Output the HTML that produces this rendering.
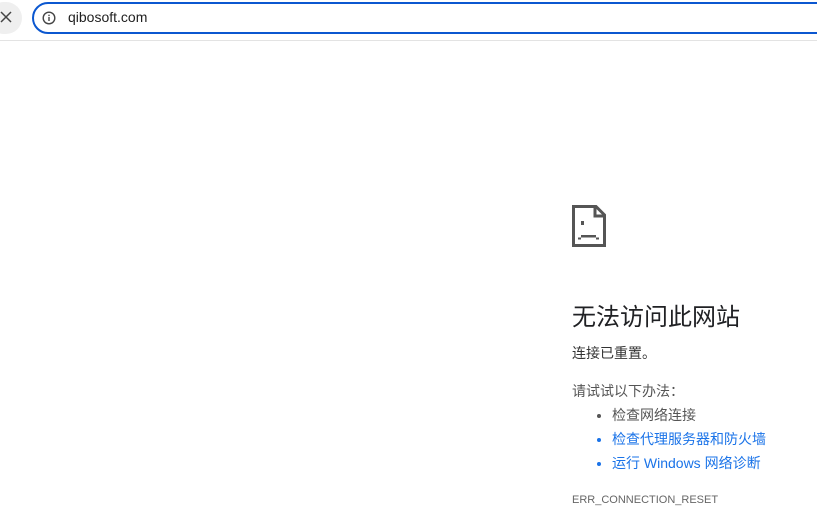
<!DOCTYPE html>
<html><head><meta charset="utf-8"><style>
html,body{margin:0;padding:0;width:817px;height:517px;overflow:hidden;background:#fff;font-family:"Liberation Sans","Noto Sans CJK SC",sans-serif;}
.bar{position:absolute;left:0;top:0;width:817px;height:38px;background:#fff;}
.x{position:absolute;left:-12px;top:2px;width:34px;height:32px;border-radius:16px;background:#efefef;}
.omni{position:absolute;left:32px;top:2px;width:800px;height:28px;border:2px solid #0b57d0;border-radius:16px;background:#fff;}
.line{position:absolute;left:0;top:40px;width:817px;height:1px;background:#e3e3e3;}
.url{position:absolute;left:68px;top:9px;font-size:14px;color:#1f1f1f;}
.t{position:absolute;left:572px;color:#202124;}
li{margin:0;}
</style></head><body>
<div class="bar"></div>
<div class="x"></div>
<svg style="position:absolute;left:0;top:11px" width="12" height="12"><path d="M1 1L11 11M11 1L1 11" stroke="#444" stroke-width="1.5"/></svg>
<div class="omni"></div>
<svg style="position:absolute;left:42px;top:11px" width="14" height="14"><circle cx="7" cy="7" r="5.8" fill="none" stroke="#444" stroke-width="1.4"/><rect x="6.3" y="6" width="1.4" height="4" fill="#444"/><rect x="6.3" y="3.7" width="1.4" height="1.4" fill="#444"/></svg>
<div class="url">qibosoft.com</div>
<div class="line"></div>
<svg style="position:absolute;left:572px;top:205px" width="34" height="42"><path d="M1.5 1.5H24L32.5 10V40.5H1.5Z" fill="none" stroke="#555" stroke-width="3"/><path d="M23 1.5V11H32" fill="none" stroke="#555" stroke-width="3"/><rect x="9" y="16" width="3" height="4" fill="#555"/><rect x="9" y="30" width="15" height="2.5" fill="#555"/><rect x="6" y="32.5" width="3" height="2" fill="#555"/><rect x="24" y="32.5" width="3" height="2" fill="#555"/></svg>
<div class="t" style="top:297px;font-size:24px">无法访问此网站</div>
<div class="t" style="top:343px;font-size:14px;color:#333">连接已重置。</div>
<div class="t" style="top:381px;font-size:14px;color:#555">请试试以下办法：</div>
<ul style="position:absolute;left:572px;top:403px;margin:0;padding-left:40px;font-size:14px;line-height:24px;color:#555">
<li>检查网络连接</li>
<li style="color:#1a73e8"><span>检查代理服务器和防火墙</span></li>
<li style="color:#1a73e8">运行 Windows 网络诊断</li>
</ul>
<div class="t" style="top:494px;font-size:11px;color:#666">ERR_CONNECTION_RESET</div>
</body></html>
